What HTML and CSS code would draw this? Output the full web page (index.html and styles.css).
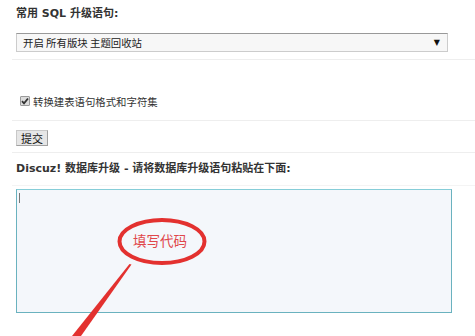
FILE: index.html
```html
<!DOCTYPE html>
<html>
<head>
<meta charset="utf-8">
<link rel="stylesheet" href="styles.css">
</head>
<body>
<div class="page">
  <div class="row row-sql">
    <div class="label">常用 SQL 升级语句:</div>
    <div class="select">
      <span class="select-text">开启 所有版块 主题回收站</span>
      <span class="select-arrow">▼</span>
    </div>
  </div>
  <div class="row row-check">
    <label class="check">
      <span class="box"><svg width="8" height="8" viewBox="0 0 8 8"><path d="M1 4.2 L3 6.3 L7 1.5" fill="none" stroke="#333" stroke-width="1.8"/></svg></span>
      <span class="check-text">转换建表语句格式和字符集</span>
    </label>
  </div>
  <div class="row row-btn">
    <button class="btn" type="button">提交</button>
  </div>
  <div class="row row-head">
    <div class="label label-wide">Discuz! 数据库升级 - 请将数据库升级语句粘贴在下面:</div>
  </div>
  <div class="sqlbox"><span class="caret"></span></div>

  <svg class="note" width="475" height="336" viewBox="0 0 475 336">
    <ellipse cx="162" cy="241.5" rx="42.5" ry="21.5" fill="none" stroke="#e3312f" stroke-width="4"/>
    <text x="160" y="246" text-anchor="middle" class="note-text">填写代码</text>
    <polygon points="129.5,264 131.5,264.5 81,336 72,336" fill="#e3312f"/>
  </svg>
</div>
</body>
</html>
```

FILE: styles.css
```css
html, body {
  margin: 0;
  padding: 0;
  background: #ffffff;
}
body {
  font-family: "DejaVu Sans", "Noto Sans CJK SC", sans-serif;
  color: #333333;
}
.page {
  position: relative;
  width: 475px;
  height: 336px;
  overflow: hidden;
  padding-left: 16px;
  box-sizing: border-box;
}
.row {
  border-bottom: 1px solid #eeeeee;
  margin-left: -4px;
  padding-left: 4px;
}
.label {
  font-size: 11px;
  font-weight: bold;
  line-height: 14px;
}
.label-wide {
  font-size: 11px;
}
.row-sql {
  padding-top: 7px;
  padding-bottom: 7px;
}
.select {
  margin-top: 12px;
  width: 432px;
  height: 19px;
  box-sizing: border-box;
  border: 1px solid #cccccc;
  border-top-color: #999999;
  background: #f7f7f7;
  display: flex;
  align-items: center;
  justify-content: space-between;
  padding: 0 7px 0 6px;
  font-family: "Noto Sans CJK SC", sans-serif;
  font-size: 10.4px;
  color: #222222;
}
.select-arrow {
  font-size: 8px;
  color: #111111;
  font-family: "DejaVu Sans", sans-serif;
}
.row-check {
  padding-top: 34px;
  padding-bottom: 12px;
}
.check {
  display: flex;
  align-items: center;
  height: 14px;
  padding-left: 4px;
}
.box {
  width: 10px;
  height: 10px;
  box-sizing: border-box;
  border: 1px solid #9a9a9a;
  background: #dcdcdc;
  display: flex;
  align-items: center;
  justify-content: center;
  border-radius: 1px;
}
.check-text {
  margin-left: 3px;
  font-family: "Noto Sans CJK SC", sans-serif;
  font-size: 10.4px;
  color: #333333;
}
.row-btn {
  padding-top: 9px;
  padding-bottom: 6px;
}
.btn {
  display: block;
  margin: 0;
  height: 16px;
  width: 32px;
  padding: 0;
  border: 1px solid #a0a0a0;
  border-top-color: #c8c8c8;
  border-left-color: #c8c8c8;
  background: #e6e6e6;
  font-family: "Noto Sans CJK SC", sans-serif;
  font-size: 11px;
  line-height: 14px;
  color: #111111;
}
.row-head {
  padding-top: 9px;
  padding-bottom: 9px;
  border-bottom-color: #f4f4f4;
}
.sqlbox {
  margin-top: 3px;
  width: 436px;
  height: 124px;
  box-sizing: border-box;
  border: 1px solid #6ab2bf;
  border-top-color: #86cdd8;
  background: #f4f7fb;
  padding: 3px 0 0 2px;
}
.caret {
  display: block;
  width: 1px;
  height: 10px;
  background: #777777;
}
.note {
  position: absolute;
  left: 0;
  top: 0;
  pointer-events: none;
}
.note-text {
  font-family: "Noto Sans CJK SC", sans-serif;
  font-size: 13.5px;
  fill: #e0474b;
}
```
